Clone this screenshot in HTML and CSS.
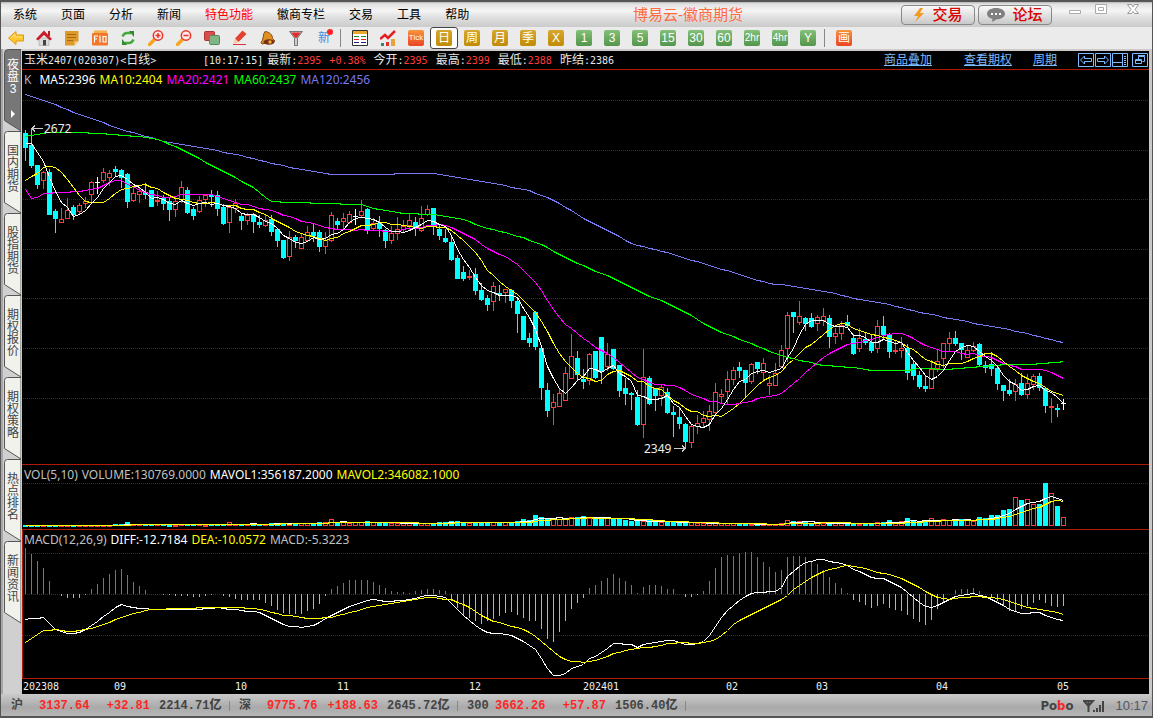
FILE: index.html
```
<!DOCTYPE html>
<html lang="zh-CN">
<head>
<meta charset="utf-8">
<title>博易云-徽商期货</title>
<link rel="stylesheet" href="styles.css">
</head>
<body>
<div class="window">
  <header class="titlebar">
    <nav class="menu">
      <button>系统</button><button>页面</button><button>分析</button><button>新闻</button><button class="hot">特色功能</button><button>徽商专栏</button><button>交易</button><button>工具</button><button>帮助</button>
    </nav>
    <h1 class="title">博易云-徽商期货</h1>
    <div class="actions">
      <button class="action"><svg width="12" height="16" viewBox="0 0 12 16"><path d="M7 1 1 9h4l-3 6 9-9H7l3-5z" fill="#f59a23"/></svg>交易</button>
      <button class="action"><svg width="18" height="14" viewBox="0 0 18 14"><path d="M9 0c5 0 9 2.400 9 5.700S14 11.400 9 11.400c-1 1-2.500 2.200-4.500 2.400.8-.8 1-1.800.9-2.900C2 10 0 8.200 0 5.700 0 2.400 4 0 9 0z" fill="#808080"/><path d="M4 5h2v2H4zM8 5h2v2H8zM12 5h2v2h-2z" fill="#fff"/></svg>论坛</button>
    </div>
    <div class="controls">
      <button aria-label="最小化"><svg width="14" height="14"><path d="M1.500 6.500h11v3h-11z" fill="#fff" stroke="#aaa"/></svg></button>
      <button aria-label="最大化"><svg width="14" height="14"><path d="M1.500.5h11v9h-11zM4.500 3.500h5v3h-5z" fill="#fff" stroke="#aaa"/></svg></button>
      <button aria-label="关闭"><svg width="14" height="14"><path d="M1.500.5h4L7 3 8.500.5h4L9 5.500l3.500 4h-4L7 7.500l-1.500 2h-4L5 5.500z" fill="#fff" stroke="#999"/></svg></button>
    </div>
  </header>

  <div class="toolbar">
    <button class="tool" aria-label="后退"><svg width="16" height="16"><path d="M.5 8 8 1.500V5h7.500v6H8v3.500z" fill="#ffc62e" stroke="#e09a12"/><path d="M3 8l4-3.500V7h7" stroke="#ffe48a" fill="none"/></svg></button>
    <button class="tool" aria-label="首页"><svg width="16" height="16"><path d="M3 8h10v7.500H3z" fill="#d9d9de" stroke="#999" stroke-width=".5"/><path d="M12 1h2v5h-2z" fill="#b51f1f"/><path d="M0 9 8 .500l8 8.500-2 1.500L8 5 2 10.500z" fill="#c81e2a"/><path d="M7 10h3v5.500H7z" fill="#444"/></svg></button>
    <button class="tool" aria-label="笔记"><svg width="16" height="16"><path d="M1 1h13.500v10l-4 4.500H1z" fill="#dc9a2a"/><path d="M3 4.500h9M3 7.500h9M3 10.500h6" stroke="#a86712"/><path d="M10.500 15.500V11.500h4z" fill="#f6d48c"/></svg></button>
    <button class="tool" aria-label="F10"><svg width="16" height="16"><path d="M2 .5h13v4H2z" fill="#f4b04c"/><rect y="3" width="16" height="12.500" rx="1" fill="#f1782b"/><path d="M2.500 12.500V6H6M2.500 9H5M8 5.500v7M11 6.500h3v5.500h-3z" fill="none" stroke="#fff" stroke-width="1.200"/></svg></button>
    <button class="tool" aria-label="刷新"><svg width="16" height="16"><path d="M2.500 6.500Q4 3 7 3h4M13.500 9.500Q12 13 9 13H5" stroke="#45a83b" stroke-width="2.500" fill="none"/><path d="M9 1h5v6zM7 15H2V9z" fill="#2f8a2d"/></svg></button>
    <button class="tool" aria-label="放大"><svg width="16" height="16"><path d="M1.500 14.500 7 9" stroke="#f6a623" stroke-width="3.500" stroke-linecap="round"/><circle cx="10" cy="5.500" r="4.700" fill="#ffe9e9" stroke="#e5352b" stroke-width="1.500"/><path d="M7.500 5.500h5M10 3v5" stroke="#e5352b" stroke-width="1.500"/></svg></button>
    <button class="tool" aria-label="缩小"><svg width="16" height="16"><path d="M1.500 14.500 7 9" stroke="#f6a623" stroke-width="3.500" stroke-linecap="round"/><circle cx="10" cy="5.500" r="4.700" fill="#ffe9e9" stroke="#e5352b" stroke-width="1.500"/><path d="M7.500 5.500h5" stroke="#e5352b" stroke-width="1.500"/></svg></button>
    <button class="tool" aria-label="叠加"><svg width="16" height="16"><rect x=".5" y="1.500" width="10" height="9" rx="1" fill="#dd4a4a" stroke="#a93434"/><rect x="5.500" y="5.500" width="10" height="9" rx="1" fill="#7fb583" stroke="#55885a"/></svg></button>
    <button class="tool" aria-label="画线"><svg width="16" height="16"><path d="M3 8.500 10.500.5l4 3.500-8 8z" fill="#e3402f"/><path d="M3 8.500l3.500 3.500L1.500 14z" fill="#f2c79a"/><path d="M1 14.500h13" stroke="#d33"/></svg></button>
    <button class="tool" aria-label="预警"><svg width="16" height="16"><path d="M5 1.500C10 2 12.500 5 12.500 8.500L15 11 2 14 1 12.500C4 10 2.500 4 5 1.500z" fill="#dd9220" stroke="#8c4a12"/><ellipse cx="9" cy="12" rx="5.500" ry="2.800" fill="#7a2f14"/><circle cx="10" cy="12" r="1.700" fill="#f0b23c"/></svg></button>
    <button class="tool" aria-label="筛选"><svg width="16" height="16"><path d="M1.500 1.500h13L9.500 8v7.500h-3V8z" fill="#ccc" stroke="#777"/><path d="M3 2.500h10L8.500 8h-1z" fill="#dc2c2c"/></svg></button>
    <button class="tool new">新<i></i></button>
    <span class="sep"></span>
    <button class="tool" aria-label="报价列表"><svg width="16" height="16"><path d="M.5.5h15v15H.5z" fill="#fff" stroke="#333"/><path d="M1 1h14v3H1z" fill="#e7a92b"/><path d="M2 6.500h5M9 6.500h5" stroke="#182"/><path d="M2 9.500h5M9 9.500h5" stroke="#d22"/><path d="M2 12.500h5M9 12.500h5" stroke="#228"/></svg></button>
    <button class="tool" aria-label="走势"><svg width="16" height="16"><path d="M1 13h3v3H1z" fill="#386"/><path d="M6 12h3v4H6z" fill="#d33"/><path d="M11 9h4v7h-4z" fill="#e8a43a"/><path d="M0 9 5 5l3 3 7-7" fill="none" stroke="#e22020" stroke-width="2.500"/></svg></button>
    <button class="tool"><span class="chip orange tick">Tick</span></button>
    <button class="tool selected"><span class="chip gold">日</span></button>
    <button class="tool"><span class="chip gold">周</span></button>
    <button class="tool"><span class="chip gold">月</span></button>
    <button class="tool"><span class="chip gold">季</span></button>
    <button class="tool"><span class="chip gold">X</span></button>
    <button class="tool"><span class="chip green">1</span></button>
    <button class="tool"><span class="chip green">3</span></button>
    <button class="tool"><span class="chip green">5</span></button>
    <button class="tool"><span class="chip green">15</span></button>
    <button class="tool"><span class="chip green">30</span></button>
    <button class="tool"><span class="chip green">60</span></button>
    <button class="tool"><span class="chip green small">2hr</span></button>
    <button class="tool"><span class="chip green small">4hr</span></button>
    <button class="tool"><span class="chip green">Y</span></button>
    <span class="sep"></span>
    <button class="tool"><span class="chip orange">画</span></button>
  </div>

  <div class="workspace">
    <aside class="tabs">
      <button class="tab active"><svg class="tab-shape" width="17" height="83"><path d="M.5 71.500V4.500q0-4 4-4H17V82z"/></svg><span>夜盘3</span><b class="more"></b></button>
      <button class="tab"><svg class="tab-shape" width="17" height="83"><path d="M.5 71.500V3.500q0-3 3-3H17V82z"/></svg><span>国内期货</span></button>
      <button class="tab"><svg class="tab-shape" width="17" height="83"><path d="M.5 71.500V3.500q0-3 3-3H17V82z"/></svg><span>股指期货</span></button>
      <button class="tab"><svg class="tab-shape" width="17" height="83"><path d="M.5 71.500V3.500q0-3 3-3H17V82z"/></svg><span>期权报价</span></button>
      <button class="tab"><svg class="tab-shape" width="17" height="83"><path d="M.5 71.500V3.500q0-3 3-3H17V82z"/></svg><span>期权策略</span></button>
      <button class="tab"><svg class="tab-shape" width="17" height="83"><path d="M.5 71.500V3.500q0-3 3-3H17V82z"/></svg><span>热点排名</span></button>
      <button class="tab"><svg class="tab-shape" width="17" height="83"><path d="M.5 71.500V3.500q0-3 3-3H17V82z"/></svg><span>新闻资讯</span></button>
    </aside>

    <main class="charts">
      <div class="quote">
        <span class="name">玉米<em>2407(020307)&lt;</em>日线<em>&gt;</em></span>
        <span class="clock"><em>[10:17:15]</em></span>
        <span>最新<em>:</em><em class="up">2395</em></span>
        <span><em class="up">+0.38%</em></span>
        <span>今开<em>:</em><em class="up">2395</em></span>
        <span>最高<em>:</em><em class="up">2399</em></span>
        <span>最低<em>:</em><em class="up">2388</em></span>
        <span>昨结<em>:2386</em></span>
        <div class="links">
          <a href="#overlay">商品叠加</a>
          <a href="#options">查看期权</a>
          <a class="near" href="#period">周期</a>
          <div class="icons">
            <button aria-label="左移"><svg width="16" height="14"><path d="M.5.5h15v13H.5zM2.500 7 6.500 3v2.500h7v3h-7V11z"/></svg></button>
            <button aria-label="右移"><svg width="16" height="14"><path d="M.5.5h15v13H.5zM13.500 7 9.500 3v2.500h-7v3h7V11z"/></svg></button>
            <button aria-label="侧栏"><svg width="16" height="14"><path d="M.5.5h15v13H.5zM10.500 1v12M1 9.500h9M12 3.500h2M12 5.500h2M12 7.500h2M12 9.500h2M12 11.500h2"/></svg></button>
            <button class="apart" aria-label="还原"><svg width="16" height="14"><path d="M.5.5h15v13H.5z"/><path d="M6.500 6V3.500h6v5h-2M3.500 6.500h6v4h-6zM6 2.500h7M3 7.500h7"/></svg></button>
          </div>
        </div>
      </div>
      <section class="pane price">
        <div class="legend"><span class="k">K</span><span class="w">MA5:2396</span><span class="y">MA10:2404</span><span class="m">MA20:2421</span><span class="g">MA60:2437</span><span class="b">MA120:2456</span></div>
        <svg id="price" class="plot price-plot"></svg>
      </section>
      <section class="pane">
        <div class="legend short"><span>VOL(5,10)</span><span>VOLUME:130769.0000</span><span class="w">MAVOL1:356187.2000</span><span class="y">MAVOL2:346082.1000</span></div>
        <svg id="volume" class="plot volume-plot"></svg>
      </section>
      <section class="pane macd">
        <div class="legend short"><span>MACD(12,26,9)</span><span class="w">DIFF:-12.7184</span><span class="y">DEA:-10.0572</span><span>MACD:-5.3223</span></div>
        <svg id="macd" class="plot macd-plot"></svg>
      </section>
      <svg id="axis" class="plot axis"></svg>
    </main>
  </div>

  <footer class="status">
    <div class="index"><span class="label">沪</span><b class="up">3137.64</b><b class="up change">+32.81</b><b class="amount">2214.71<span>亿</span></b></div>
    <div class="index"><span class="label">深</span><b class="up">9775.76</b><b class="up change">+188.63</b><b class="amount">2645.72<span>亿</span></b></div>
    <div class="index"><b>300</b><b class="up">3662.26</b><b class="up change">+57.87</b><b class="amount">1506.40<span>亿</span></b></div>
    <div class="tray">
      <span class="brand">Po<i>b</i>o</span>
      <svg width="22" height="13"><path d="M1 1h9L5.500 6zM5.500 1v11" fill="none" stroke="#444" stroke-width="2"/><path d="M10 10h2v2h-2zM13 8h2v4h-2zM16 5h2v7h-2zM19 1h2v11h-2z" fill="#444"/></svg>
      <time>10:17</time>
    </div>
  </footer>
</div>
<script src="chart.js"></script>
</body>
</html>
```

FILE: styles.css
```
* { box-sizing: border-box; }
body { margin: 0; font: 12px/14px "Liberation Sans", "Noto Sans CJK SC", sans-serif; background: #555; }
button { margin: 0; padding: 0; border: 0; background: none; font: inherit; color: inherit; }
svg { display: block; flex: none; }
em, i { font-style: normal; }

.window { min-height: 100vh; display: flex; flex-direction: column; border: 1px solid #555; border-top-width: 2px; border-bottom-width: 2px; background: #c9c9c9; }

.titlebar { display: flex; align-items: center; height: 25px; padding-left: 12px; background: linear-gradient(#b8b4b4 0, #e2e2e2 2px, #f5f5f5 9px, #e0e0e0 15px, #cbcbcb); }
.menu { display: flex; gap: 24px; color: #000; }
.menu .hot { color: #f00; }
.title { flex: 1; margin: 0; padding-left: 6px; text-align: center; font: 15px/20px "Liberation Sans", "Noto Sans CJK SC", sans-serif; color: #ff6b3d; }
.actions { display: flex; gap: 3px; }
.action { display: flex; align-items: center; justify-content: center; gap: 7px; width: 74px; height: 20px; border: 1px solid #888; border-radius: 4px; background: linear-gradient(#fafafa, #c9c9c9); font-size: 15px; line-height: 16px; font-weight: 500; color: #d90000; }
.controls { display: flex; align-self: flex-start; gap: 12px; padding: 2px 12px 0 16px; }
.controls button { width: 14px; height: 14px; }
.controls button + button + button { margin-left: 6px; }

.toolbar { display: flex; align-items: center; height: 24px; padding-left: 1px; background: #ebebeb; border-bottom: 2px solid #cfcaca; }
.tool { position: relative; display: flex; align-items: center; justify-content: center; width: 28px; height: 22px; color: #3f8fe0; }
.tool.new i { position: absolute; left: 17px; top: 2px; width: 6px; height: 6px; border-radius: 3px; background: #f22; }
.tool.selected { border: 1px solid #444; border-radius: 3px; background: #fff; }
.sep { width: 8px; height: 18px; background: linear-gradient(#888, #888) 2px 0 / 1px 100% no-repeat; }
.chip { width: 16px; height: 16px; border-radius: 2px; font: 12px/16px "Liberation Sans", "Noto Sans CJK SC", sans-serif; text-align: center; white-space: nowrap; color: #fff; }
.chip.small { font-size: 10px; }
.chip.tick { font-size: 8px; }
.gold { background: linear-gradient(#d6a72f, #c18c04); }
.green { background: linear-gradient(#83c078, #53954c); }
.orange { background: linear-gradient(#f6963c, #ea4424); }

.workspace { flex: 1; display: flex; padding-right: 3px; }
.tabs { flex: none; width: 21px; margin-top: -2px; padding-left: 1px; border-left: 2px solid #a9a6a9; background: linear-gradient(90deg, #d0d0d0 0 17px, #cfcaca 17px); }
.tab { position: relative; display: flex; flex-direction: column; align-items: flex-start; justify-content: flex-start; width: 17px; height: 82px; padding-top: 14px; color: #444; }
.tab-shape { position: absolute; left: 0; top: 0; fill: #f2f2ec; stroke: #555; }
.tab span { position: relative; display: block; width: 12px; margin-left: 3px; line-height: 12px; word-break: break-all; text-align: center; }
.tab.active { color: #fff; padding-top: 10px; }
.tab.active .tab-shape { fill: #777; }
.more { position: relative; display: block; margin: 15px 0 0 7px; border: 4px solid transparent; border-left: 4px solid #fff; border-right: 0; }

.charts { flex: 1; min-width: 0; display: flex; flex-direction: column; background: #000; color: #e6e6e6; }
.quote { display: flex; align-items: center; gap: 8px; height: 19px; padding: 0 1px 0 2px; border-bottom: 1px solid #b01808; white-space: nowrap; }
.quote em { font: 10px/14px "DejaVu Sans Mono", monospace; }
.quote .name { width: 171px; }
.quote .clock { margin-right: -4px; }
.up { color: #ff3b3b; }
.links { display: flex; align-items: center; margin-left: auto; gap: 32px; }
.links a { color: #7cbcff; text-decoration: underline; }
.links .near { margin-left: -11px; }
.icons { display: flex; gap: 1px; margin-left: -11px; }
.icons svg { fill: none; stroke: #7cbcff; }
.icons .apart { margin-left: 3px; }

.pane { border-bottom: 1px solid #b01808; }
.legend { display: flex; align-items: center; gap: 4px; height: 20px; padding-left: 2px; font: 12px/16px "Noto Sans", sans-serif; color: #c0c0c0; white-space: nowrap; }
.legend.short { height: 18px; padding-top: 2px; }
.legend .k { margin-right: 4px; color: #b0b0c8; }
.legend .w { color: #fff; }
.legend .y { color: #ff0; }
.legend .m { color: #f0f; }
.legend .g { color: #0f0; }
.legend .b { color: #7878f0; }
.macd { border-left: 1px solid #b01808; }
.macd .legend { padding-left: 1px; }

.plot { width: 100%; overflow: hidden; shape-rendering: crispEdges; }
.price-plot { height: 374px; }
.volume-plot { height: 46px; }
.macd-plot { height: 130px; }
.axis { height: 15px; }
.plot text { font: 10px "DejaVu Sans Mono", monospace; fill: #f0f0f0; }
.plot .note { font: 12px "Noto Sans", sans-serif; fill: #eee; }
.grid { stroke: #900; stroke-dasharray: 1 1; }
.line { fill: none; stroke-width: 1; }
.rise { stroke: #ff3b3b; fill: #000; }
.fall { stroke: #0ff; fill: #0ff; }
.flat { stroke: #fff; fill: #fff; }

.status { display: flex; align-items: center; height: 22px; padding: 2px 4px 0 10px; background: linear-gradient(#cacaca, #aaa 60%, #b6b6b6); font: bold 12px/14px "Liberation Mono", "Noto Sans CJK SC", monospace; color: #444; }
.index { display: grid; grid-template-columns: 28px 50px 61px 61px; width: 228px; background: linear-gradient(#888, #888) 218px 50% / 1px 10px no-repeat; align-items: center; }
.index .up { color: #ff2626; }
.index .change { text-align: right; }
.amount { padding-left: 9px; white-space: nowrap; }
.amount span { display: inline-block; width: 12px; }
.tray { display: flex; align-items: center; gap: 10px; margin-left: auto; }
.brand { font: bold 13px/16px "DejaVu Sans Condensed", "Noto Sans", sans-serif; }
.brand i { color: #ff2626; }
.tray time { font: 13px/16px "Liberation Sans", sans-serif; color: #556; }
```

FILE: chart.js
```
// One entry per trading day: direction, high, low, body top, body bottom.
var days = ("c130,161,133,148 c128,168,145,166 c165,189,165,185 r171,189,172,181 c169,215,172,215 c209,233,211,219 r208,223,219,223 r198,219,210,219 c205,220,207,215 r203,214,205,212 " +
"r197,208,201,204 r181,202,182,195 w177,194,182,182 r168,183,172,181 r170,186,173,178 c166,177,169,172 c169,188,170,178 c173,208,174,202 r187,202,193,201 r187,203,191,195 " +
"c183,199,192,195 c190,207,190,207 r191,206,200,202 c195,210,198,204 c197,221,201,210 r197,217,201,210 r181,203,187,200 c187,214,190,213 c207,220,209,216 r196,213,200,212 " +
"r195,207,195,200 c190,207,195,196 c191,216,195,209 c204,225,207,224 r207,233,207,223 r199,213,203,209 c213,230,216,221 r213,225,215,221 c213,233,214,222 c215,228,222,225 " +
"r215,227,220,226 c215,236,219,232 c228,247,229,241 c240,259,240,258 r231,261,237,257 c235,248,237,241 r234,249,237,249 r226,241,232,241 c224,242,232,236 c230,252,232,247 " +
"r232,254,240,247 r212,242,215,241 c218,229,221,225 r213,229,218,222 r211,224,214,223 w209,225,216,216 r200,217,211,216 c208,234,209,230 r218,231,223,229 c216,237,223,229 " +
"c229,248,230,241 r226,244,233,241 r217,240,229,234 r220,232,226,230 r214,230,220,226 c217,236,222,229 r206,232,218,231 r205,216,209,215 c208,235,208,227 c225,240,229,236 " +
"c229,243,238,242 c235,261,242,260 c255,279,258,279 c266,281,272,279 r270,280,276,278 c268,295,274,291 c283,301,290,300 c295,311,298,305 r282,311,286,302 c285,301,293,295 " +
"r289,303,289,293 c289,308,290,301 c297,333,301,314 c316,340,316,340 c333,347,338,343 c311,350,312,347 c347,400,348,388 c383,417,390,411 r394,425,402,408 r389,407,393,407 " +
"r367,401,373,401 r334,379,356,379 c351,380,358,375 c369,389,379,382 r353,385,354,381 c351,379,351,378 c337,384,337,372 r343,371,354,367 c349,370,349,369 c365,397,365,391 " +
"c378,405,388,394 c392,410,393,395 c390,426,397,425 r349,438,377,425 c376,405,378,404 c388,411,388,396 r384,406,387,396 c388,414,392,413 c406,437,412,415 c407,429,417,424 " +
"c423,449,424,442 r424,448,426,443 r415,434,423,427 r411,427,418,423 r405,431,411,420 r383,415,392,413 r389,404,394,397 r371,405,379,392 r367,385,370,380 c362,378,367,371 " +
"c370,397,370,383 r363,384,364,382 c362,374,362,369 r358,382,363,373 r375,395,383,386 r363,386,373,386 r345,368,350,367 r312,362,315,349 c312,333,312,317 r301,325,316,323 " +
"c317,331,318,324 c313,328,318,327 r315,331,317,324 r308,326,316,321 c315,348,318,337 r328,344,333,337 r321,340,325,334 c315,328,322,326 c334,355,338,354 r328,352,338,349 " +
"c333,345,339,343 c335,353,342,351 r320,353,326,349 c316,340,326,335 c333,358,334,352 r340,354,350,352 r337,358,348,351 c344,380,348,373 c360,380,364,376 c371,389,375,387 " +
"c375,392,386,389 r360,389,369,389 r350,372,361,369 r343,368,343,359 r332,352,338,344 c331,346,338,344 c343,360,343,350 r345,358,350,358 r342,352,346,351 c343,366,344,365 " +
"c361,373,365,368 c352,376,364,369 c365,390,368,384 c385,401,385,391 c379,396,390,394 r379,401,384,392 c373,396,383,395 r374,399,383,395 r374,390,376,385 c373,391,376,388 " +
"c388,413,388,406 r398,423,406,408 c404,417,408,410 w399,410,403,403").split(" ").map(function (s) {
  var v = s.slice(1).split(",").map(Number);
  return { kind: { r: "rise", c: "fall", w: "flat" }[s[0]], hi: v[0], lo: v[1], top: v[2], bot: v[3], close: s[0] === "c" ? v[3] : v[2] };
});

var volumes = [1,1,1,1,1,1,1,1,1,1,1,1,1,1,1,2,2,4,2,2,2,2,2,2,1,1,2,2,2,2,1,2,2,2,4,2,2,2,3,2,2,3,3,3,3,3,3,3,3,4,
4,7,4,4,3,4,4,5,4,4,4,3,3,3,3,3,3,3,3,4,4,5,5,4,3,4,4,3,4,4,4,4,5,7,6,11,9,8,8,7,8,9,9,10,8,8,9,8,7,8,
6,5,5,5,6,5,4,4,4,4,4,4,3,3,3,3,3,3,3,2,3,2,2,2,2,2,3,6,5,5,4,3,3,3,4,3,3,3,3,2,2,3,4,4,6,3,5,8,6,4,
5,8,6,7,6,6,7,7,5,9,8,11,11,16,17,29,26,27,22,22,44,33,20,9];

var STEP = 6;
function x(i) { return 3 + i * STEP; }

function average(values, n, seed) {
  return values.map(function (_, i) {
    if (i < seed.length) return seed[i];
    var part = values.slice(Math.max(0, i - n + 1), i + 1);
    return part.reduce(function (a, b) { return a + b; }) / part.length;
  });
}

// Expands "x,y" turning points into a value for every day.
function spread(text) {
  var p = text.split(" ").map(function (s) { return s.split(",").map(Number); });
  return days.map(function (_, i) {
    var px = 25 + i * STEP, k = 1;
    while (k < p.length - 1 && p[k][0] < px) k++;
    var a = p[k - 1], b = p[k];
    return a[1] + (b[1] - a[1]) * (px - a[0]) / (b[0] - a[0]);
  });
}

function line(values, offset, color, dx) {
  var pts = values.map(function (v, i) { return (x(i) + 0.5 + (dx || 0)) + "," + (Math.round(v - offset) + 0.5); });
  return '<polyline class="line" stroke="' + color + '" points="' + pts.join(" ") + '"/>';
}
function grid(list, start) {
  return list.map(function (y) { return '<line class="grid" x1="' + start + '" x2="100%" y1="' + (y + 0.5) + '" y2="' + (y + 0.5) + '"/>'; }).join("");
}

var closes = days.map(function (d) { return d.close; });
var out = grid([10, 60, 109, 159, 208, 258, 308], 1);
days.forEach(function (d, i) {
  var c = x(i) + 0.5, t = d.top - 90;
  out += '<g class="' + d.kind + '"><line x1="' + c + '" x2="' + c + '" y1="' + (d.hi - 90) + '" y2="' + (d.lo - 90) + '"/>';
  if (d.kind === "flat") out += '<line x1="' + (c - 2.5) + '" x2="' + (c + 2.5) + '" y1="' + (t + 0.5) + '" y2="' + (t + 0.5) + '"/>';
  else out += '<rect x="' + (c - 2) + '" y="' + (t + 0.5) + '" width="4" height="' + Math.max(1, d.bot - d.top - 1) + '"/>';
  out += '</g>';
});
out += line(spread("25,94 50,102 75,113 95,119 120,129 140,134 160,140 180,144 200,147 215,150 240,155 271,163 300,169 330,174 380,174 403,173 435,173 447,175 480,181 525,189 550,198 587,220 613,233 632,244 643,246 670,253 685,258 700,262 758,280 770,283 800,287 825,291 850,297 885,303 915,311 940,316 975,323 1000,327 1030,334 1063,342"), 90, "#7878f0");
out += line(spread("25,136 31,135 40,133 55,132 85,132 97,133 115,134 135,136 153,138 160,139 170,144 185,151 200,159 215,167 229,174 240,180 253,187 260,193 271,201 295,202 320,203 360,204 370,207 385,210 403,213 430,214 447,216 463,219 480,226 501,231 525,238 545,246 560,255 571,260 591,269 611,277 640,292 660,300 680,309 691,315 700,321 724,333 740,339 760,347 780,355 800,360 823,365 850,367 872,370 905,370 923,368 940,369 960,368 985,366 1005,364 1030,364 1063,361"), 90, "#0f0");
out += line(average(closes, 20, [189, 198, 197, 193, 193, 192, 192, 192, 191, 191, 190, 189, 188, 185, 182, 180, 180, 184, 186]), 90, "#f0f");
out += line(average(closes, 10, [180, 176, 173, 167, 166, 167, 172, 179, 187]), 90, "#ff0");
out += line(average(closes, 5, [143, 143, 152, 161]), 90, "#fff");
out += '<g fill="none" stroke="#ccc"><path d="M10 38.500h11M13 35.500l-3 3 3 3M652 358.500h11M660 355.500l3 3-3 3"/></g>';
out += '<text class="note" x="22" y="43">2672</text><text class="note" x="622" y="363">2349</text>';
document.getElementById("price").innerHTML = out;

out = grid([0], 1);
volumes.forEach(function (v, i) {
  var kind = days[i].kind === "flat" ? "rise" : days[i].kind;
  out += '<rect class="' + kind + '" x="' + (x(i) - 1.5) + '" y="' + (43.5 - v) + '" width="4" height="' + Math.max(1, v - 1) + '"/>';
});
var levels = volumes.map(function (v) { return 43 - v; });
out += line(average(levels, 5, []), 0, "#fff") + line(average(levels, 10, []), 0, "#ff0");
document.getElementById("volume").innerHTML = out;

var diff = spread("25,619 31,618 43,617 55,629 67,633 79,632 86,629 103,616 115,607 121,604 133,607 150,609 200,609 215,607 240,610 260,612 275,620 285,625 300,627 315,625 330,615 350,605 370,599 390,601 410,599 430,594 445,597 460,612 480,629 490,633 510,634 521,640 536,650 548,670 553,675 562,675 572,667 583,664 590,657 597,655 613,643 633,644 638,648 643,644 658,641 673,640 685,644 695,644 705,640 712,631 722,615 735,603 741,598 750,593 760,592 775,591 781,587 787,576 797,567 805,562 817,559 823,559 835,562 848,565 853,569 860,571 872,578 883,578 893,583 902,587 913,597 926,607 932,607 943,602 955,596 973,593 987,597 998,602 1010,610 1023,613 1040,612 1048,616 1057,619 1063,620");
var dea = spread("25,642 31,638 43,630 55,629 67,631 79,630 86,629 103,624 120,617 133,613 150,609 180,608 215,607 240,607 260,609 285,615 310,618 330,617 350,612 370,606 400,601 430,597 450,599 465,605 490,620 520,628 530,632 540,640 560,657 567,660 583,662 597,660 613,653 633,648 652,647 667,643 680,642 695,643 705,642 714,640 725,632 735,622 745,617 760,609 783,598 797,586 812,576 828,569 848,565 860,567 877,572 890,574 903,579 920,588 937,597 948,599 973,596 993,597 1007,600 1027,607 1052,611 1063,614");
out = grid([5, 46, 87], 0);
diff.forEach(function (v, i) {
  var bar = Math.round(2 * (dea[i] - v)), c = x(i) - 0.5;
  if (bar) out += '<line class="' + (bar > 0 ? "rise" : "fall") + '" x1="' + c + '" x2="' + c + '" y1="46" y2="' + (46 - bar) + '"/>';
});
out += line(diff, 548, "#fff", -1) + line(dea, 548, "#ff0", -1);
document.getElementById("macd").innerHTML = out;

var months = [[1, "202308"], [92, "09"], [213, "10"], [315, "11"], [447, "12"], [561, "202401"], [704, "02"], [794, "03"], [914, "04"], [1035, "05"]];
document.getElementById("axis").innerHTML = months.map(function (m) { return '<text x="' + m[0] + '" y="11">' + m[1] + '</text>'; }).join("");
```
